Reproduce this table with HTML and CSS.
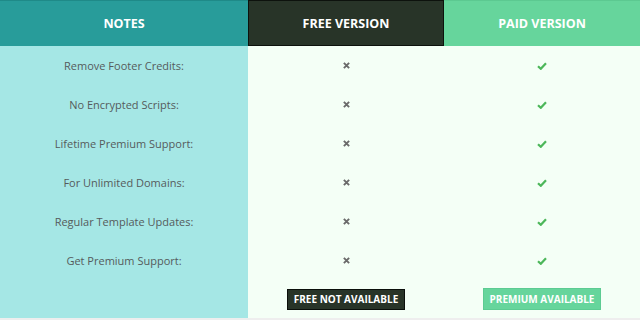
FILE: index.html
```html
<!DOCTYPE html>
<html>
<head>
<meta charset="utf-8">
<link rel="stylesheet" href="styles.css">
</head>
<body>
<div class="table">
  <div class="cell head notes-head">NOTES</div>
  <div class="cell head free-head">FREE VERSION</div>
  <div class="cell head paid-head">PAID VERSION</div>

  <div class="cell note">Remove Footer Credits:</div>
  <div class="cell mark"><svg class="x" viewBox="0 0 8 8"><path d="M1 1L7 7M7 1L1 7"/></svg></div>
  <div class="cell mark"><svg class="ok" viewBox="0 0 10 8"><path d="M1 4.2L3.8 6.8L9 1.2"/></svg></div>

  <div class="cell note">No Encrypted Scripts:</div>
  <div class="cell mark"><svg class="x" viewBox="0 0 8 8"><path d="M1 1L7 7M7 1L1 7"/></svg></div>
  <div class="cell mark"><svg class="ok" viewBox="0 0 10 8"><path d="M1 4.2L3.8 6.8L9 1.2"/></svg></div>

  <div class="cell note">Lifetime Premium Support:</div>
  <div class="cell mark"><svg class="x" viewBox="0 0 8 8"><path d="M1 1L7 7M7 1L1 7"/></svg></div>
  <div class="cell mark"><svg class="ok" viewBox="0 0 10 8"><path d="M1 4.2L3.8 6.8L9 1.2"/></svg></div>

  <div class="cell note">For Unlimited Domains:</div>
  <div class="cell mark"><svg class="x" viewBox="0 0 8 8"><path d="M1 1L7 7M7 1L1 7"/></svg></div>
  <div class="cell mark"><svg class="ok" viewBox="0 0 10 8"><path d="M1 4.2L3.8 6.8L9 1.2"/></svg></div>

  <div class="cell note">Regular Template Updates:</div>
  <div class="cell mark"><svg class="x" viewBox="0 0 8 8"><path d="M1 1L7 7M7 1L1 7"/></svg></div>
  <div class="cell mark"><svg class="ok" viewBox="0 0 10 8"><path d="M1 4.2L3.8 6.8L9 1.2"/></svg></div>

  <div class="cell note">Get Premium Support:</div>
  <div class="cell mark"><svg class="x" viewBox="0 0 8 8"><path d="M1 1L7 7M7 1L1 7"/></svg></div>
  <div class="cell mark"><svg class="ok" viewBox="0 0 10 8"><path d="M1 4.2L3.8 6.8L9 1.2"/></svg></div>

  <div class="cell note foot"></div>
  <div class="cell mark foot"><span class="btn btn-free">FREE NOT AVAILABLE</span></div>
  <div class="cell mark foot"><span class="btn btn-paid">PREMIUM AVAILABLE</span></div>
</div>
</body>
</html>
```

FILE: styles.css
```css
html, body {
  margin: 0;
  padding: 0;
  background: #eeeeee;
  width: 640px;
  height: 320px;
  overflow: hidden;
}
.table {
  display: grid;
  grid-template-columns: 248px 196px 196px;
  grid-template-rows: 46px repeat(6, 39px) 38px;
  background: #f4fff6;
  font-family: "Open Sans", "Liberation Sans", sans-serif;
}
.cell {
  display: flex;
  align-items: center;
  justify-content: center;
}
.head {
  color: #ffffff;
  font-weight: 700;
  font-size: 12.5px;
}
.notes-head {
  background: #289c9a;
  border-top: 1px solid #1f8a88;
}
.free-head {
  background: #283428;
  border: 1px solid #0d120d;
}
.paid-head {
  background: #66d59c;
  border-top: 1px solid #5cc991;
}
.note {
  background: #a5e7e5;
  color: #555b5c;
  font-size: 11px;
}
.x {
  width: 7px;
  height: 7px;
  fill: none;
  stroke: #6a6a6a;
  stroke-width: 2.2;
}
.ok {
  width: 10px;
  height: 8px;
  fill: none;
  stroke: #4cb75a;
  stroke-width: 2.2;
}
.btn {
  font-size: 10px;
  font-weight: 700;
  color: #ffffff;
  padding: 0 6px;
  height: 21px;
  display: flex;
  align-items: center;
  box-sizing: border-box;
}
.btn-free {
  background: #283428;
  border: 1px solid #0b0f0b;
}
.btn-paid {
  background: #66d59c;
  border: 1px solid #5ccb92;
  height: 22px;
}
```
